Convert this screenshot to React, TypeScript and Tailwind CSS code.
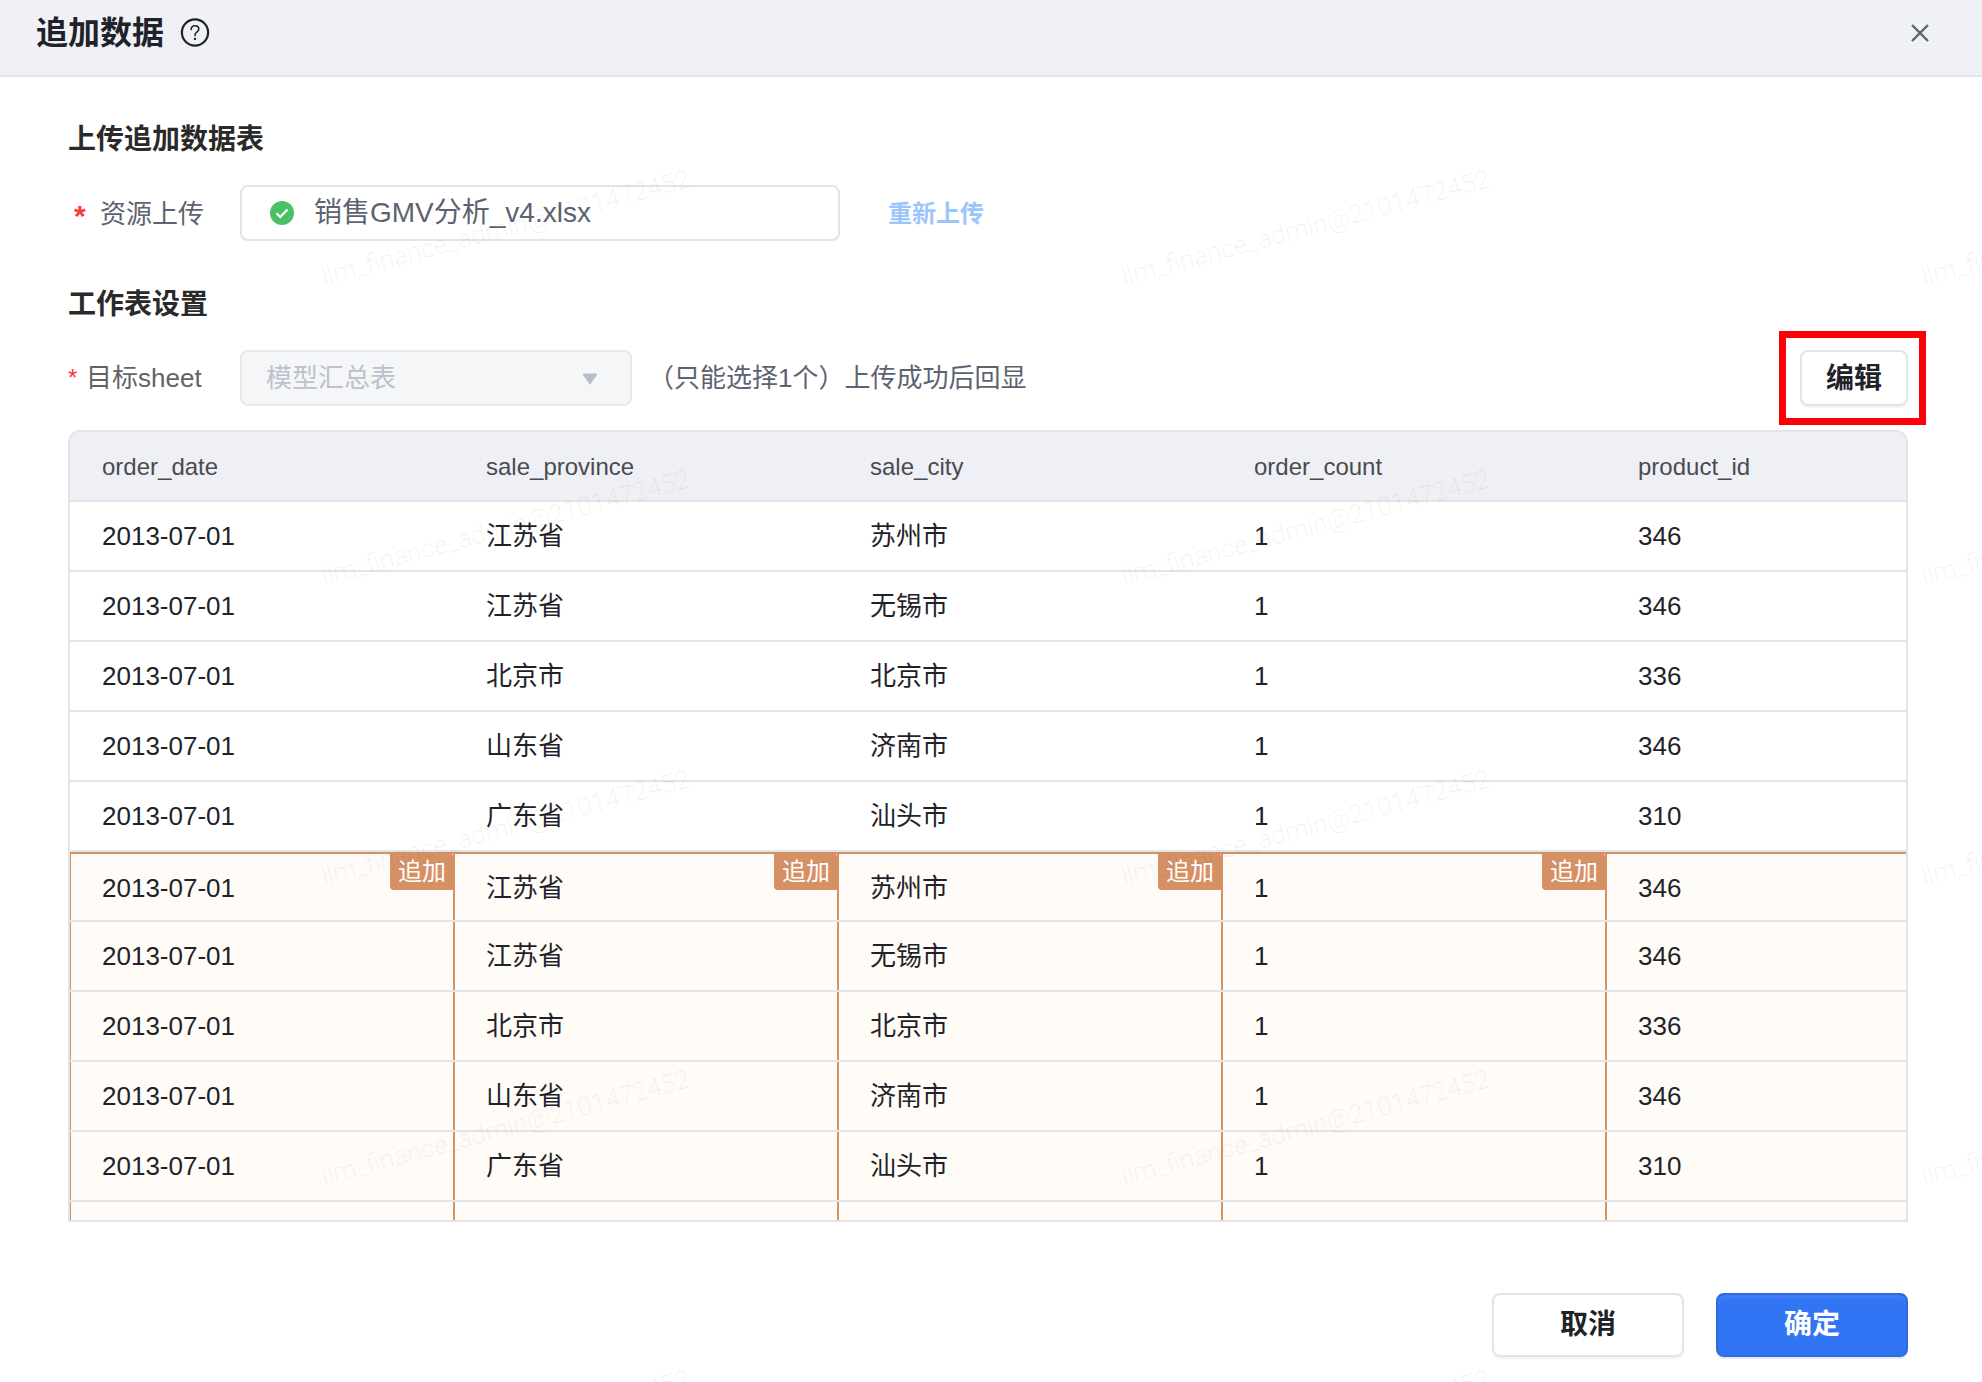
import React from "react";

const columns = ["order_date", "sale_province", "sale_city", "order_count", "product_id"];

const rows = [
  ["2013-07-01", "江苏省", "苏州市", "1", "346"],
  ["2013-07-01", "江苏省", "无锡市", "1", "346"],
  ["2013-07-01", "北京市", "北京市", "1", "336"],
  ["2013-07-01", "山东省", "济南市", "1", "346"],
  ["2013-07-01", "广东省", "汕头市", "1", "310"],
];

function Watermark() {
  return (
    <div
      aria-hidden="true"
      className="pointer-events-none absolute inset-0 z-10 grid auto-rows-[300px] grid-cols-[repeat(3,800px)] overflow-hidden pl-[326px]"
    >
      {Array.from({ length: 15 }, (_, i) => (
        <div key={i} className="flex items-end pb-2">
          <span className="origin-bottom-left -rotate-15 font-[Roboto] text-[26px] leading-8 font-light whitespace-nowrap text-black/6">
            llm_finance_admin@2101472452
          </span>
        </div>
      ))}
    </div>
  );
}

function HelpIcon() {
  return (
    <svg viewBox="0 0 30 30" className="size-[30px]" fill="none" stroke="#1f2329" strokeWidth="2.2">
      <circle cx="15" cy="14.5" r="13.1" />
      <path
        d="M11.2 11.4c0-2.2 1.600-3.700 3.800-3.700s3.800 1.400 3.800 3.400c0 1.400-.8 2.200-2 3.100-1.200.9-1.800 1.600-1.800 2.800v.6"
        strokeWidth="1.6"
        strokeLinecap="round"
      />
      <circle cx="15" cy="20.9" r="1.2" fill="#1f2329" stroke="none" />
    </svg>
  );
}

function CheckIcon() {
  return (
    <svg viewBox="0 0 24 24" className="size-6 shrink-0">
      <circle cx="12" cy="12" r="12" fill="#4ac067" />
      <path d="M6.5 12.3l3.7 3.7 7.3-7.6" fill="none" stroke="#fff" strokeWidth="2.2" />
    </svg>
  );
}

function DataRow({ cells, appended, first }: { cells: string[]; appended?: boolean; first?: boolean }) {
  return (
    <tr className={appended ? "bg-[#fffcf7]" : ""}>
      {cells.map((cell, i) => (
        <td key={i} className="border-b-2 border-[#e3e4ea] p-0">
          <div
            className={[
              "relative flex h-[68px] items-center text-[26px] leading-8",
              i === 0 && !appended ? "pl-8" : "pl-[31px]",
              appended ? "border-[#d69065]" : "",
              appended && i === 0 ? "border-l" : "",
              appended && i < 4 ? "border-r-2" : "",
              first ? "border-t-2 pt-0.5" : "",
            ].join(" ")}
          >
            {cell}
            {first && i < 4 && (
              <span className="absolute top-0 right-0 rounded-tr-[2px] rounded-bl-[4px] bg-[#d69065] pr-[7px] pl-2 text-2xl leading-9 text-white">
                追加
              </span>
            )}
          </div>
        </td>
      ))}
    </tr>
  );
}

export default function App() {
  return (
    <div className="relative min-h-screen overflow-hidden bg-white font-['Liberation_Sans','Noto_Sans_CJK_SC',sans-serif] text-[#1f2329]">
      <header className="flex items-center justify-between border-b-2 border-[#e3e4ea] bg-[#f0f1f6] pt-[9px] pr-[51px] pb-[18px] pl-9">
        <div className="flex items-center gap-4">
          <h1 className="text-[32px] leading-[48px] font-semibold">追加数据</h1>
          <button type="button" aria-label="帮助">
            <HelpIcon />
          </button>
        </div>
        <button type="button" aria-label="关闭" className="p-0.5">
          <svg viewBox="0 0 18 18" className="size-[18px]" stroke="#5c6370" strokeWidth="2.4">
            <path d="M1 1l16 16M17 1L1 17" />
          </svg>
        </button>
      </header>

      <main className="pr-[74px] pl-[68px]">
        <h2 className="pt-[43px] text-[28px] leading-10 font-semibold text-[#2a2a2a]">上传追加数据表</h2>
        <div className="mt-[25px] flex h-14 items-center">
          <label htmlFor="file" className="flex w-[172px] items-center pt-0.5 pl-1.5 text-[26px] leading-9 text-[#5c6370]">
            <span className="w-[26px] pt-1 text-[30px] leading-9 font-bold text-[#f7393c]">*</span>
            资源上传
          </label>
          <div className="flex h-14 w-[600px] items-center gap-5 rounded-lg border-2 border-[#e3e4ea] pl-7">
            <CheckIcon />
            <input
              id="file"
              readOnly
              value="销售GMV分析_v4.xlsx"
              className="min-w-0 flex-1 text-[28px] leading-10 text-[#5c6370] outline-none"
            />
          </div>
          <button type="button" className="ml-12 pt-0.5 text-2xl leading-9 font-semibold text-[#9cc5fb]">
            重新上传
          </button>
        </div>

        <h2 className="mt-11 text-[28px] leading-10 font-semibold text-[#2a2a2a]">工作表设置</h2>
        <div className="mt-[25px] flex h-14 items-center">
          <label htmlFor="sheet" className="flex w-[172px] items-center text-[26px] leading-9 text-[#636363]">
            <span className="w-[18px] text-2xl leading-9 text-[#f7393c]">*</span>
            目标sheet
          </label>
          <div className="relative">
            <select
              id="sheet"
              disabled
              className="h-14 w-98 appearance-none rounded-lg border-2 border-[#e8e9ec] bg-[#f5f6f8] pl-6 text-[26px] leading-9 text-[#bcc1cc] opacity-100"
            >
              <option>模型汇总表</option>
            </select>
            <svg viewBox="0 0 16 12" className="absolute top-[23px] right-8.5 h-3 w-4" fill="#b7bdca">
              <path d="M1.8.5h12.4a.9.9 0 01.7 1.4L8.8 10.8a1 1 0 01-1.6 0L1.1 1.9A.9.9 0 011.8.5z" />
            </svg>
          </div>
          <p className="ml-4 text-[26px] leading-9 text-[#5c6370]">（只能选择1个）上传成功后回显</p>
          <div className="-mr-[18px] ml-auto border-[7px] border-[#ff0008] py-3 pr-[11px] pl-3.5">
            <button
              type="button"
              className="h-14 w-[108px] rounded-lg border-2 border-[#e3e4e6] pt-0.5 text-[28px] leading-10 font-semibold shadow-[0_2px_0_#f5f5f5]"
            >
              编辑
            </button>
          </div>
        </div>

        <div className="mt-6 overflow-hidden rounded-t-xl border-2 border-[#e3e4ea]">
          <table className="w-full table-fixed border-separate border-spacing-0">
            <colgroup>
              <col className="w-[385px]" />
              <col className="w-[384px]" />
              <col className="w-[384px]" />
              <col className="w-[384px]" />
              <col />
            </colgroup>
            <thead>
              <tr className="bg-[#eff0f5]">
                {columns.map((c, i) => (
                  <th
                    key={c}
                    scope="col"
                    className={`h-[70px] border-b-2 border-[#e3e4ea] pt-0.5 pr-0 pb-0 text-left text-2xl leading-9 font-normal text-[#4a4b4f] ${i === 0 ? "pl-8" : "pl-[31px]"}`}
                  >
                    {c}
                  </th>
                ))}
              </tr>
            </thead>
            <tbody>
              {rows.map((r, i) => (
                <DataRow key={i} cells={r} />
              ))}
              {rows.map((r, i) => (
                <DataRow key={i} cells={r} appended first={i === 0} />
              ))}
              <tr className="bg-[#fffcf7]">
                {columns.map((c, i) => (
                  <td
                    key={c}
                    className={`h-[18px] border-[#d69065] p-0 ${i === 0 ? "border-l" : ""} ${i < 4 ? "border-r-2" : ""}`}
                  />
                ))}
              </tr>
            </tbody>
          </table>
        </div>
      </main>

      <footer className="flex justify-end gap-8 pt-[71px] pr-[74px] pb-[25px]">
        <button
          type="button"
          className="h-16 w-48 rounded-lg border-2 border-[#e3e4e6] bg-white text-[28px] leading-10 font-semibold shadow-[0_2px_0_#f5f5f5]"
        >
          取消
        </button>
        <button
          type="button"
          className="h-16 w-48 rounded-lg border-2 border-[#2d6be0] bg-[#3175f5] text-[28px] leading-10 font-semibold text-white shadow-[0_2px_0_#e6e8ef,inset_0_4px_0_#3b7bf5]"
        >
          确定
        </button>
      </footer>

      <Watermark />
    </div>
  );
}
